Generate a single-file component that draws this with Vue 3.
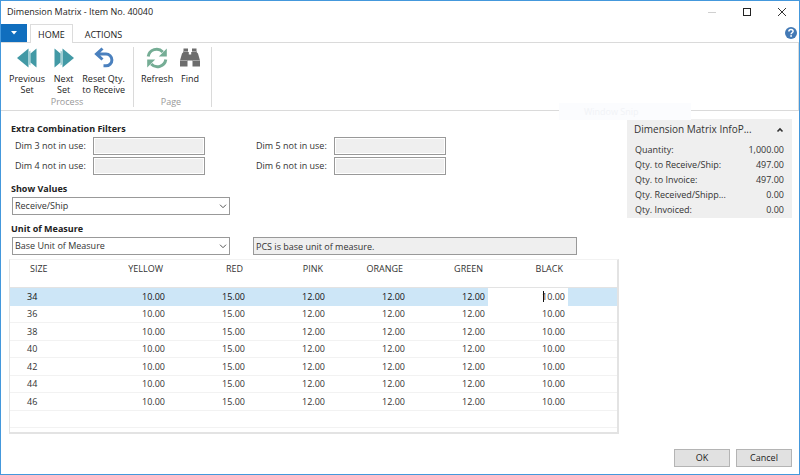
<script setup>
import { ref } from 'vue'

const showValues = ref('Receive/Ship')
const unit = ref('Base Unit of Measure')
const editing = ref('10.00')
const columns = ['YELLOW', 'RED', 'PINK', 'ORANGE', 'GREEN', 'BLACK']
const values = ['10.00', '15.00', '12.00', '12.00', '12.00', '10.00']
const sizes = ['34', '36', '38', '40', '42', '44', '46']
const filters = [3, 5, 4, 6]
const facts = [
  ['Quantity:', '1,000.00'],
  ['Qty. to Receive/Ship:', '497.00'],
  ['Qty. to Invoice:', '497.00'],
  ['Qty. Received/Shipp...', '0.00'],
  ['Qty. Invoiced:', '0.00'],
]
</script>

<template>
  <div class="window">
    <header class="titlebar">
      <h1>Dimension Matrix - Item No. 40040</h1>
      <div class="controls">
        <button class="minimize" aria-label="Minimize" disabled>
          <svg width="10" height="10" viewBox="0 0 10 10"><path d="M1 5.5h8" stroke="#d0d0d0" /></svg>
        </button>
        <button aria-label="Maximize">
          <svg width="10" height="10" viewBox="0 0 10 10"><rect x="1.5" y="1.5" width="7" height="7" fill="none" stroke="#222" /></svg>
        </button>
        <button aria-label="Close">
          <svg width="10" height="10" viewBox="0 0 10 10"><path d="M1 1l8 8M9 1l-8 8" stroke="#333" /></svg>
        </button>
      </div>
    </header>

    <nav class="tabs">
      <button class="file" aria-label="Application menu">
        <svg width="6" height="4" viewBox="0 0 6 4"><path d="M0 0h6L3 3.6z" fill="#fff" /></svg>
      </button>
      <button class="tab active">HOME</button>
      <button class="tab">ACTIONS</button>
      <button class="help" aria-label="Help">
        <svg width="14" height="14" viewBox="0 0 14 14">
          <circle cx="7" cy="7" r="6" fill="#4379b5" />
          <path d="M4.900 5.600C4.900 4.100 5.800 3.500 7 3.500s2.100.7 2.100 1.800c0 1.400-2 1.500-2 2.900" fill="none" stroke="#fff" stroke-width="1.5" />
          <rect x="6.3" y="9.2" width="1.6" height="1.6" fill="#fff" />
        </svg>
      </button>
    </nav>

    <section class="ribbon">
      <div class="group process">
        <div class="actions">
          <button class="previous">
            <svg width="22" height="22" viewBox="0 0 22 22"><path d="M12.500 1.500v19L1 11z" fill="#4299a5" /><path d="M12.500 5v12l2 1.500v-15z" fill="#9fcfd4" /><path d="M20.500 1.500v19l-6-5V6.500z" fill="#4299a5" /></svg>
            <span>Previous<br>Set</span>
          </button>
          <button class="next">
            <svg width="22" height="22" viewBox="0 0 22 22"><path d="M9.500 1.500v19L21 11z" fill="#4299a5" /><path d="M9.500 5v12l-2 1.500v-15z" fill="#9fcfd4" /><path d="M1.500 1.500v19l6-5V6.500z" fill="#4299a5" /></svg>
            <span>Next<br>Set</span>
          </button>
          <button class="reset">
            <svg width="22" height="22" viewBox="0 0 22 22"><path d="M9.500 1.500L3.500 7 9.500 12.500M4 7h9a5.800 5.800 0 010 11.800H10.500" fill="none" stroke="#4a80be" stroke-width="3" /></svg>
            <span>Reset Qty.<br>to Receive</span>
          </button>
        </div>
        <div class="caption">Process</div>
      </div>
      <div class="group page">
        <div class="actions">
          <button class="refresh">
            <svg width="22" height="22" viewBox="0 0 22 22">
              <path d="M2.200 9.500A8.500 8.500 0 0116.800 5M19.800 12.500A8.500 8.500 0 015.200 17" fill="none" stroke="#75ad95" stroke-width="3" />
              <path d="M20.800 1.500V9.500H12.800zM1.200 20.500V12.500H9.200z" fill="#75ad95" />
            </svg>
            <span>Refresh</span>
          </button>
          <button class="find">
            <svg width="22" height="22" viewBox="0 0 22 22">
              <path d="M4.500 1.500H9V5h.8v2.500h2.400V5h.8V1.500h4.500V5l1.500 1.500 2 7V19.500h-7.500v-6h-5v6H1V13.500l2-7L4.500 5z" fill="#6d6d6d" />
              <path d="M4 4.500h5M13 4.500h5M1 13.500h7.500M13.500 13.500H21" stroke="#a5a5a5" />
            </svg>
            <span>Find</span>
          </button>
        </div>
        <div class="caption">Page</div>
      </div>
      <div class="snip">Window Snip</div>
    </section>

    <div class="body">
      <main>
        <section>
          <h2>Extra Combination Filters</h2>
          <div class="filters">
            <template v-for="n in filters" :key="n">
              <label :for="'dim' + n">Dim {{ n }} not in use:</label>
              <input :id="'dim' + n" class="box" type="text" readonly>
            </template>
          </div>
        </section>
        <section>
          <h2><label for="show">Show Values</label></h2>
          <div class="line">
            <div class="dropdown">
              <select id="show" v-model="showValues"><option>Receive/Ship</option></select>
              <svg width="8" height="5" viewBox="0 0 8 5"><path d="M1 .7l3 3 3-3" fill="none" stroke="#555" /></svg>
            </div>
          </div>
        </section>
        <section>
          <h2><label for="unit">Unit of Measure</label></h2>
          <div class="line">
            <div class="dropdown">
              <select id="unit" v-model="unit"><option>Base Unit of Measure</option></select>
              <svg width="8" height="5" viewBox="0 0 8 5"><path d="M1 .7l3 3 3-3" fill="none" stroke="#555" /></svg>
            </div>
            <input class="note" type="text" value="PCS is base unit of measure." aria-label="Unit description" readonly>
          </div>
        </section>

        <div class="matrix">
          <table>
            <colgroup>
              <col class="edge-col"><col class="edge-col"><col v-for="n in 5" :key="n" class="value-col"><col>
            </colgroup>
            <thead>
              <tr><th class="size">SIZE</th><th v-for="c in columns" :key="c">{{ c }}</th><th></th></tr>
            </thead>
            <tbody>
              <tr v-for="(s, r) in sizes" :key="s" :class="{ selected: r === 0 }">
                <td class="size">{{ s }}</td>
                <td v-for="(v, c) in values" :key="c" :class="{ editing: r === 0 && c === 5 }">
                  <input v-if="r === 0 && c === 5" v-model="editing" type="text" aria-label="Size 34, black">
                  <template v-else>{{ v }}</template>
                </td>
                <td></td>
              </tr>
              <tr><td colspan="8"></td></tr>
            </tbody>
          </table>
        </div>
      </main>

      <aside>
        <div class="fact-head">
          <h2>Dimension Matrix InfoP...</h2>
          <button aria-label="Collapse"><svg width="8" height="6" viewBox="0 0 8 6"><path d="M1.500 4.500L4 2l2.500 2.500" fill="none" stroke="#333" stroke-width="1.600" /></svg></button>
        </div>
        <dl>
          <div v-for="f in facts" :key="f[0]"><dt>{{ f[0] }}</dt><dd>{{ f[1] }}</dd></div>
        </dl>
      </aside>
    </div>

    <footer>
      <button>OK</button>
      <button>Cancel</button>
    </footer>
  </div>
</template>

<style>
body { margin: 0; background: #fff; }
</style>

<style scoped>
* { box-sizing: border-box; }
.window {
  min-height: 100vh;
  display: flex;
  flex-direction: column;
  border: 1px solid #4498dc;
  background: #fff;
  color: #333;
  font: 9px/14px "Open Sans", "Noto Sans", sans-serif;
}
button, input, select { font: inherit; color: inherit; margin: 0; padding: 0; border: 0; background: none; border-radius: 0; outline: 0; }
h1, h2, dl, dd { margin: 0; font-size: inherit; }
button { display: flex; align-items: center; justify-content: center; }

.titlebar { display: flex; justify-content: space-between; height: 23px; padding: 0 0 0 6px; }
h1 { font-weight: 400; line-height: 22px; color: #222; }
.controls { display: flex; }
.controls button { width: 35px; height: 21px; }

.tabs { display: flex; height: 18px; position: relative; z-index: 1; }
.file { width: 26px; background: #106ebe; }
.tab { padding: 2px 7px 0; border: 1px solid transparent; border-bottom: 0; color: #222; }
.tab.active { margin: 0 4px 0 3px; height: 19px; background: #fff; border-color: #dcdcdc; }
.help { margin-left: auto; width: 16px; }

.ribbon { display: flex; height: 69px; border: solid #dadada; border-width: 1px 1px 1px 0; position: relative; }
.group { display: flex; flex-direction: column; justify-content: space-between; margin: 4px 0 3px; border-right: 1px solid #dadada; }
.process { width: 133px; padding: 0 8px; }
.page { width: 78px; padding: 0 10px 0 7px; }
.actions { display: flex; justify-content: space-between; }
.actions button { flex-direction: column; justify-content: flex-start; line-height: 11px; color: #222; }
.actions span { margin-top: 4px; white-space: nowrap; }
.caption { text-align: center; color: #999; line-height: 11px; }
.snip { position: absolute; left: 558px; top: 60px; width: 132px; height: 17px; padding-left: 25px; background: #fbfcfe; color: #f1f3f6; line-height: 17px; }

.body { display: flex; gap: 8px; padding: 8px 7px 0 8px; }
main { flex: 1; min-width: 0; padding-top: 2px; }
main > section { padding: 0 0 6px 2px; }
main h2 { font-weight: 700; line-height: 16px; color: #222; }
.filters { display: grid; grid-template-columns: 78px 112px 129px 112px; gap: 2px 0; padding-left: 4px; }
.filters label { line-height: 18px; }
.filters label:nth-of-type(even) { padding-left: 51px; }
.box { width: 100%; height: 18px; border: 1px solid #999; background: #efefef; box-shadow: inset 0 0 0 1px #fff; }
.line { display: flex; gap: 23px; padding-left: 1px; }
.dropdown { position: relative; width: 218px; }
select { appearance: none; display: block; width: 100%; height: 18px; padding: 0 16px 0 2px; border: 1px solid #999; background: #fff; }
.dropdown svg { position: absolute; right: 3px; top: 7px; pointer-events: none; }
.note { width: 324px; height: 18px; padding: 0 2px; border: 1px solid #999; background: #efefef; }

.matrix { margin-top: -2px; padding-bottom: 4px; border: solid #e3e3e3; border-width: 1px 2px 2px 1px; border-top-color: #f2f2f2; }
table { width: 100%; border-collapse: separate; border-spacing: 0; table-layout: fixed; }
.edge-col { width: 79px; }
.value-col { width: 80px; }
th { height: 28px; padding: 2px 5px 0 0; vertical-align: top; font-weight: 400; text-align: right; border-bottom: 1px solid #e3e3e3; }
td { height: 17px; padding: 0 3px 0 0; line-height: 14px; text-align: right; border-bottom: 1px solid #f2f2f2; }
tr:nth-child(odd) td { height: 18px; }
th.size { text-align: left; padding-left: 20px; }
td.size { text-align: left; padding-left: 17px; }
.selected td { background: #cde6f7; color: #111; border-color: #cde6f7; }
.selected .editing { background: #fff; border-color: #fff; position: relative; }
.editing input { display: block; width: 100%; height: 14px; text-align: right; color: #333; }
.editing::before { content: ""; position: absolute; right: 24px; top: 3px; width: 1px; height: 11px; background: #111; }

aside { width: 165px; align-self: flex-start; padding: 0 8px 1px 7px; background: #efefef; }
.fact-head { display: flex; justify-content: space-between; height: 23px; }
.fact-head h2 { font-size: 10px; font-weight: 400; line-height: 20px; white-space: nowrap; }
.fact-head button { width: 8px; height: 21px; }
dl div { display: flex; justify-content: space-between; line-height: 15px; }
dt { padding-left: 1px; }

footer { display: flex; justify-content: flex-end; gap: 6px; margin-top: auto; padding: 0 7px 7px; }
footer button { width: 56px; height: 18px; border: 1px solid #b4b4b4; background: #e1e1e1; color: #222; }
</style>
